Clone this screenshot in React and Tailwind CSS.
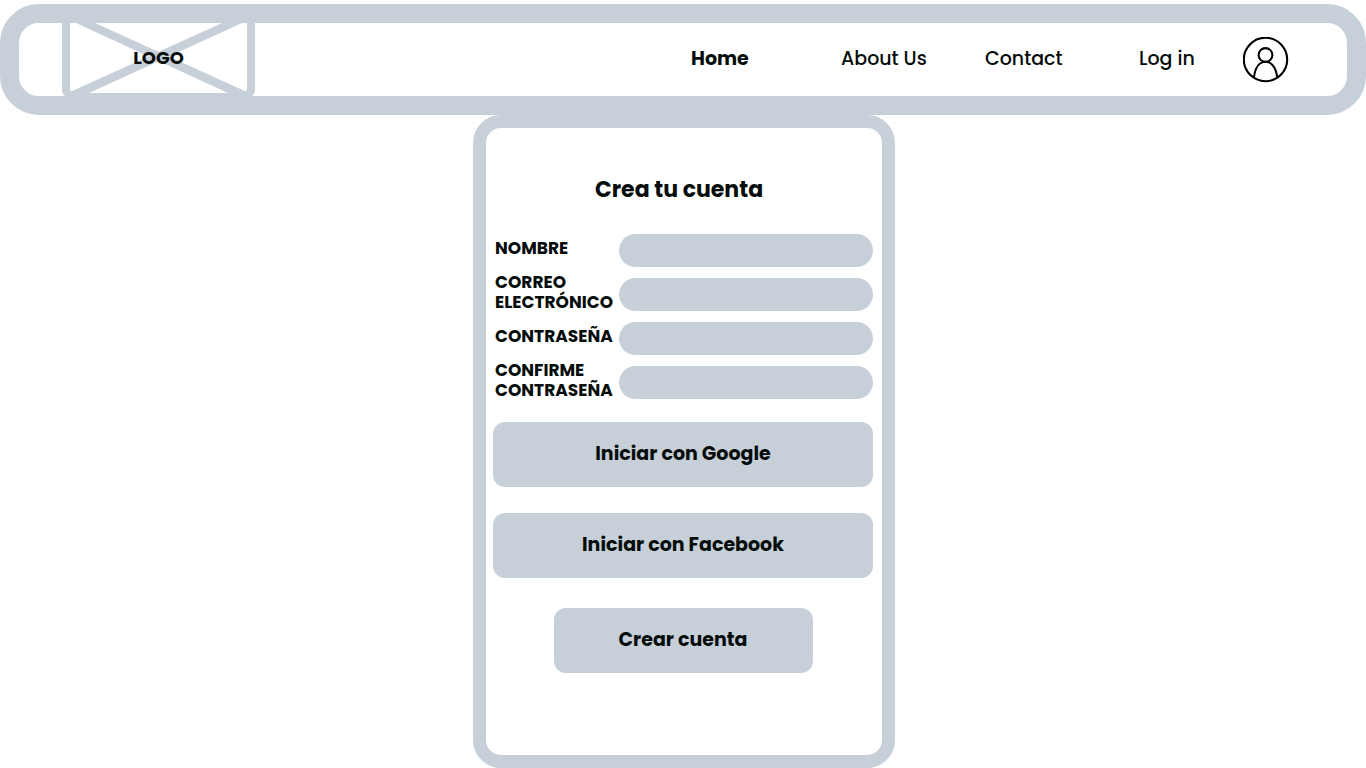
const links = [
  { label: "Home", width: "w-[150px]", weight: "font-bold" },
  { label: "About Us", width: "w-[144px]", weight: "font-medium" },
  { label: "Contact", width: "w-[154px]", weight: "font-medium" },
  { label: "Log in", width: "w-[104px]", weight: "font-medium" },
];

const fields = [
  { id: "nombre", label: "NOMBRE", type: "text" },
  { id: "correo", label: "CORREO ELECTRÓNICO", type: "email" },
  { id: "contrasena", label: "CONTRASEÑA", type: "password" },
  { id: "confirme", label: "CONFIRME CONTRASEÑA", type: "password" },
];

function Logo() {
  return (
    <a href="#" className="grid h-full w-[193px] shrink-0 place-items-center">
      <svg
        viewBox="0 0 193 73"
        className="col-start-1 row-start-1 h-[73px] w-[193px]"
        fill="#c7cfd9"
        aria-hidden="true"
      >
        <path d="M0 0H8V66Q8 68 10 69L27 70H166L183 69Q185 68 185 66V0H193V66Q193 71 190 73H3Q0 71 0 66Z" />
        <path d="M14 0H33L185 69L182 73H172L166 70Z" />
        <path d="M180 0H160L8 69L11 73H21L27 70Z" />
      </svg>
      <span className="col-start-1 row-start-1 pb-1 text-lg leading-6 font-bold">LOGO</span>
    </a>
  );
}

function UserIcon() {
  return (
    <svg viewBox="0 0 46 46" className="size-[46px]" fill="none" stroke="#000" strokeWidth="2.1" aria-hidden="true">
      <circle cx="22.5" cy="22.5" r="21.7" />
      <circle cx="22.5" cy="18" r="6.9" />
      <path d="M11 40C12.2 30.5 16.5 24.7 22.5 24.7S33 30.5 34.2 40" />
    </svg>
  );
}

function ActionButton({ children, type = "button", className }) {
  return (
    <button type={type} className={`h-[65px] rounded-xl bg-[#c7cfd9] pb-0.5 text-[19px] leading-6 font-bold ${className}`}>
      {children}
    </button>
  );
}

export default function App() {
  return (
    <div className="bg-white pt-1 font-['Poppins','Inter',sans-serif] text-[#050c0a]">
      <header className="flex h-[111px] items-center justify-between rounded-[39px] border-[19px] border-[#c7cfd9] pr-[58px] pl-[43px]">
        <Logo />
        <nav className="flex items-center text-[19px] leading-6">
          {links.map((link) => (
            <div key={link.label} className={`pb-0.5 ${link.width}`}>
              <a href="#" className={link.weight}>
                {link.label}
              </a>
            </div>
          ))}
          <a href="#" aria-label="Log in">
            <UserIcon />
          </a>
        </nav>
      </header>

      <main className="flex justify-center pl-0.5">
        <form className="flex w-[422px] flex-col rounded-[28px] border-[13px] border-[#c7cfd9] pt-12 pr-[9px] pb-[82px] pl-[7px]">
          <h1 className="pr-2 text-center text-[22px] leading-7 font-bold">Crea tu cuenta</h1>

          <div className="mt-6 flex flex-col">
            {fields.map((field) => (
              <div key={field.id} className="flex h-11 items-center">
                <label htmlFor={field.id} className="w-[126px] shrink-0 pb-1 pl-0.5 text-[17px] leading-5 font-bold">
                  {field.label}
                </label>
                <input
                  id={field.id}
                  type={field.type}
                  className="h-[33px] min-w-0 flex-1 rounded-full bg-[#c7cfd9] px-4"
                />
              </div>
            ))}
          </div>

          <ActionButton className="mt-[18px]">Iniciar con Google</ActionButton>
          <ActionButton className="mt-[26px]">Iniciar con Facebook</ActionButton>
          <ActionButton type="submit" className="mt-[30px] w-[259px] self-center">
            Crear cuenta
          </ActionButton>
        </form>
      </main>
    </div>
  );
}
